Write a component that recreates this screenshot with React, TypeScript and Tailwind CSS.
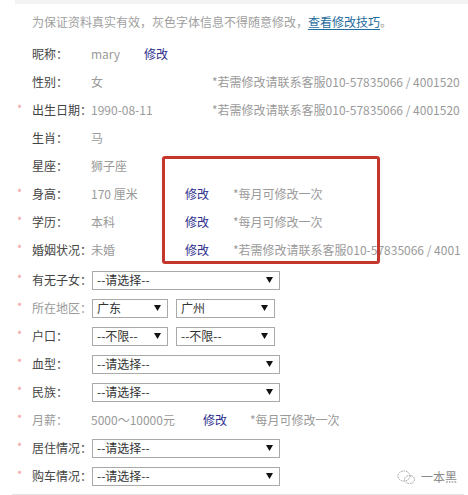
import React from "react";

type InfoRow = {
  star?: boolean;
  label: string;
  value: string;
  valueW?: number;
  edit?: boolean;
  editW?: number;
  note?: string;
  faded?: boolean;
};

// the page is cropped at the right edge, keep only the visible part of the phone note
const SERVICE_NOTE = "*若需修改请联系客服010-57835066 / 4001520";
const SERVICE_NOTE_SHORT = "*若需修改请联系客服010-57835066 / 4001";
const MONTH_NOTE = "*每月可修改一次";

// text rows above the select boxes
const infoRows: InfoRow[] = [
  { label: "昵称：", value: "mary", valueW: 53, edit: true },
  { label: "性别：", value: "女", valueW: 121, note: SERVICE_NOTE },
  { star: true, label: "出生日期：", value: "1990-08-11", valueW: 121, note: SERVICE_NOTE },
  { label: "生肖：", value: "马" },
  { label: "星座：", value: "狮子座" },
  { star: true, label: "身高：", value: "170 厘米", valueW: 94, edit: true, editW: 48, note: MONTH_NOTE },
  { star: true, label: "学历：", value: "本科", valueW: 94, edit: true, editW: 48, note: MONTH_NOTE },
  { star: true, label: "婚姻状况：", value: "未婚", valueW: 94, edit: true, editW: 48, note: SERVICE_NOTE_SHORT },
];

const Arrow = () => (
  <svg width="7" height="6" viewBox="0 0 7 6" className="shrink-0">
    <path d="M0 0 H7 L3.5 6 Z" fill="#111" />
  </svg>
);

const Select: React.FC<{ text: string; w: string }> = ({ text, w }) => (
  <div className={`${w} flex h-[19px] items-center justify-between border border-[#a9a9a9] bg-white pl-[4px] pr-[6px] text-[12px] text-[#333]`}>
    <span>{text}</span>
    <Arrow />
  </div>
);

const Star: React.FC<{ on?: boolean }> = ({ on }) => (
  <span className="w-[32px] shrink-0 pl-[17px] text-[11px] text-[#f19a9a] -translate-y-[2px]">
    {on ? "*" : ""}
  </span>
);

const TextRow: React.FC<{ row: InfoRow }> = ({ row }) => (
  <div className="flex h-[28px] items-center">
    <Star on={row.star} />
    <span className={`w-[59px] shrink-0 ${row.faded ? "text-[#9a9a9a]" : "text-[#444]"}`}>
      {row.label}
    </span>
    <span className="shrink-0 text-[#9a9a9a]" style={{ width: row.valueW }}>
      {row.value}
    </span>
    {row.edit && (
      <span className="shrink-0 text-[#2e2f8f]" style={{ width: row.editW }}>
        修改
      </span>
    )}
    {row.note && <span className="shrink-0 text-[#9a9a9a]">{row.note}</span>}
  </div>
);

const SelectRow: React.FC<{ star?: boolean; label: string; faded?: boolean; children: React.ReactNode }> = ({
  star,
  label,
  faded,
  children,
}) => (
  <div className="flex h-[28px] items-center">
    <Star on={star} />
    <span className={`w-[60px] shrink-0 ${faded ? "text-[#9a9a9a]" : "text-[#444]"}`}>{label}</span>
    <div className="flex gap-[8px]">{children}</div>
  </div>
);

export default function App() {
  return (
    <div
      className="relative h-[495px] w-[468px] overflow-hidden whitespace-nowrap bg-white text-[12px]"
      style={{ fontFamily: '"Noto Sans CJK SC", "Noto Sans", sans-serif' }}
    >
      {/* bottom edge of the previous block */}
      <div className="ml-[15px] h-[4px] bg-[#f3f3f3]" />

      {/* notice */}
      <div className="flex h-[36px] items-center pl-[32px] text-[#a0a0a0]">
        为保证资料真实有效，灰色字体信息不得随意修改，
        <span className="text-[#1f6c9e] underline underline-offset-2">查看修改技巧</span>。
      </div>

      {infoRows.map((r) => (
        <TextRow key={r.label} row={r} />
      ))}

      <div className="h-[2px]" />

      <SelectRow star label="有无子女：">
        <Select text="--请选择--" w="w-[188px]" />
      </SelectRow>
      <SelectRow star label="所在地区：" faded>
        <Select text="广东" w="w-[76px]" />
        <Select text="广州" w="w-[99px]" />
      </SelectRow>
      <SelectRow star label="户口：">
        <Select text="--不限--" w="w-[76px]" />
        <Select text="--不限--" w="w-[99px]" />
      </SelectRow>
      <SelectRow star label="血型：">
        <Select text="--请选择--" w="w-[188px]" />
      </SelectRow>
      <SelectRow star label="民族：">
        <Select text="--请选择--" w="w-[188px]" />
      </SelectRow>
      <TextRow
        row={{ star: true, faded: true, label: "月薪：", value: "5000～10000元", valueW: 112, edit: true, editW: 47, note: MONTH_NOTE }}
      />
      <SelectRow star label="居住情况：">
        <Select text="--请选择--" w="w-[188px]" />
      </SelectRow>
      <SelectRow star label="购车情况：">
        <Select text="--请选择--" w="w-[188px]" />
      </SelectRow>

      <div className="ml-[12px] mt-[4px] h-px w-[452px] bg-[#e4e4e4]" />

      {/* red annotation box */}
      <div className="pointer-events-none absolute left-[162px] top-[156px] h-[108px] w-[218px] rounded-[3px] border-[3px] border-[#c5362d]" />

      {/* watermark */}
      <div className="absolute left-[397px] top-[468px] flex items-center gap-[5px] text-[12px] text-[#8a8a8a]">
        <svg width="19" height="15" viewBox="0 0 19 15" fill="none" stroke="#9a9a9a" strokeWidth="1" strokeDasharray="1.5 1">
          <ellipse cx="7" cy="6" rx="6" ry="5" />
          <ellipse cx="12.5" cy="9.5" rx="5" ry="4" />
        </svg>
        <span>一本黑</span>
      </div>
    </div>
  );
}
